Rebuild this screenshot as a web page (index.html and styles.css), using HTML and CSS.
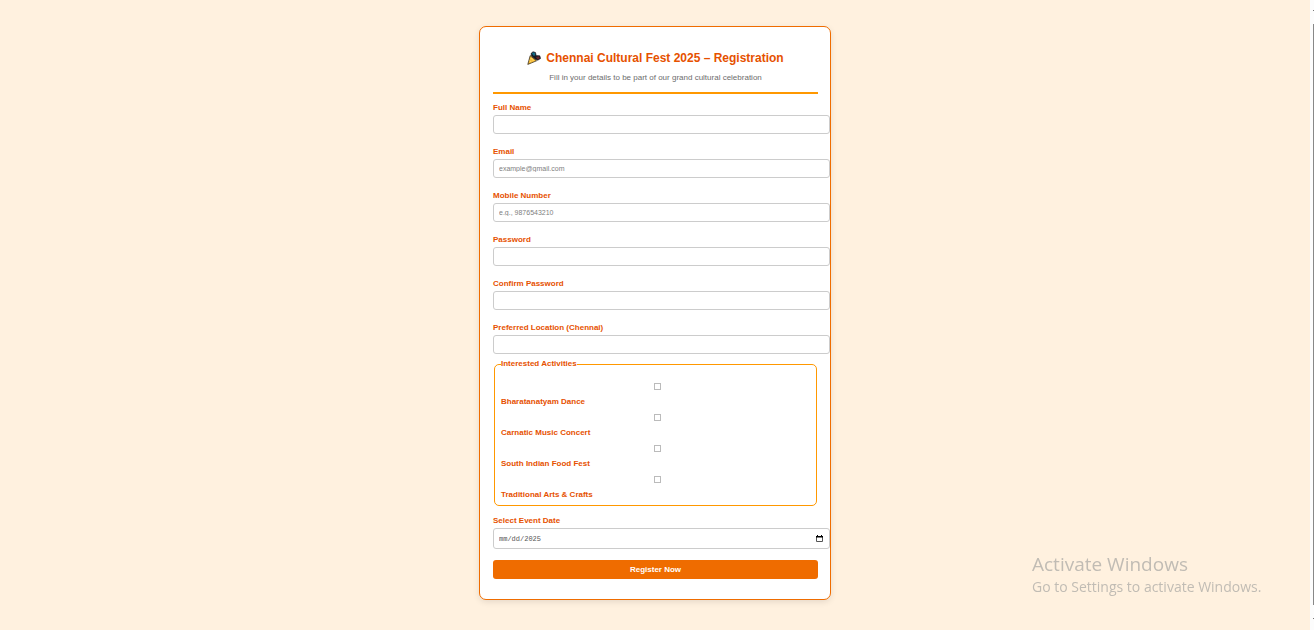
FILE: index.html
```html
<!DOCTYPE html>
<html lang="en">
<head>
<meta charset="utf-8">
<title>Chennai Cultural Fest 2025 – Registration</title>
<link rel="stylesheet" href="styles.css">
</head>
<body>
<main class="page">
  <form class="card">
    <header class="header">
      <h1 class="title">
        <svg class="popper" viewBox="0 0 14 14" aria-hidden="true">
          <path d="M4 2.5 6 .7 8.5 1.5 9.2 4.5 12.8 4.8 13.6 7.5 10.8 9.2 8 8.3 4.5 5z" fill="#171a20" stroke="#171a20" stroke-width=".6"/>
          <path d="M4.8 2.6 6.3 1.2 8 2 8.3 4.5 6.5 4.8z" fill="#126c87"/>
          <path d="M9 5.9 12 5.3 12.9 7.3 10.5 8.5z" fill="#682329"/>
          <path d="M3.2 4.6 9.5 9.8 .8 13.4z" fill="#f8bd38" stroke="#20180d" stroke-width=".7" stroke-linejoin="round"/>
          <path d="M3.8 7 6.8 10.2M2.8 9.5 4.2 11.2" stroke="#ffdc75" stroke-width=".9"/>
        </svg>
        <span>Chennai Cultural Fest 2025 – Registration</span>
      </h1>
      <p class="subtitle">Fill in your details to be part of our grand cultural celebration</p>
    </header>

    <div class="fields">
      <div class="field"><label class="label" for="name">Full Name</label><input class="input" id="name" type="text"></div>
      <div class="field"><label class="label" for="email">Email</label><input class="input" id="email" type="email" placeholder="example@gmail.com"></div>
      <div class="field"><label class="label" for="mobile">Mobile Number</label><input class="input" id="mobile" type="tel" placeholder="e.g., 9876543210"></div>
      <div class="field"><label class="label" for="password">Password</label><input class="input" id="password" type="password"></div>
      <div class="field"><label class="label" for="confirm">Confirm Password</label><input class="input" id="confirm" type="password"></div>
      <div class="field"><label class="label" for="location">Preferred Location (Chennai)</label><input class="input" id="location" type="text"></div>
    </div>

    <fieldset class="activities">
      <legend class="legend">Interested Activities</legend>
      <div class="activity"><input class="check" id="dance" type="checkbox"><label class="label" for="dance">Bharatanatyam Dance</label></div>
      <div class="activity"><input class="check" id="music" type="checkbox"><label class="label" for="music">Carnatic Music Concert</label></div>
      <div class="activity"><input class="check" id="food" type="checkbox"><label class="label" for="food">South Indian Food Fest</label></div>
      <div class="activity"><input class="check" id="crafts" type="checkbox"><label class="label" for="crafts">Traditional Arts &amp; Crafts</label></div>
    </fieldset>

    <div class="field">
      <label class="label" for="date">Select Event Date</label>
      <div class="date-wrap">
        <input class="input date" id="date" type="text" value="mm/dd/2025">
        <svg class="calendar" viewBox="0 0 7 7" aria-hidden="true"><path d="M.5 1.5h6v5h-6z" fill="none" stroke="#555"/><path d="M0 1h7v1.5H0zM1 0h1v1H1zM5 0h1v1H5z" fill="#000"/></svg>
      </div>
    </div>

    <button class="submit" type="submit">Register Now</button>
  </form>
</main>
<div class="scrollbar" aria-hidden="true"><span class="arrow"></span><span class="thumb"></span><span class="arrow"></span></div>
<aside class="watermark">
  <p class="watermark-title">Activate Windows</p>
  <p class="watermark-text">Go to Settings to activate Windows.</p>
</aside>
</body>
</html>
```
FILE: styles.css
```css
* {
  box-sizing: border-box;
}

body {
  display: flex;
  min-height: 100vh;
  margin: 0;
  background: #fff1df;
  font-family: "Liberation Sans", Arial, sans-serif;
}

.page {
  flex: 1;
  padding: 26px 0 30px;
}

.card {
  width: 100%;
  max-width: 352px;
  margin: 0 auto;
  padding: 22px 12px 20px 13px;
  border: 1px solid #ef6c00;
  border-radius: 7px;
  background: #fff;
  box-shadow: 0 2px 6px rgba(0, 0, 0, 0.1);
}

.header {
  margin-bottom: 9px;
  padding-bottom: 9px;
  border-bottom: 2px solid #ff9800;
  text-align: center;
}

.title {
  display: flex;
  align-items: center;
  justify-content: center;
  gap: 5px;
  margin: 0;
  color: #e65100;
  font-size: 12px;
  line-height: 18px;
}

.popper {
  width: 14px;
  height: 14px;
}

.subtitle {
  margin: 6px 0 0;
  color: #6d6d6d;
  font-size: 8px;
  line-height: 10px;
}

.fields {
  display: grid;
  gap: 13px;
}

.field {
  display: flex;
  flex-direction: column;
  gap: 2px;
}

.label,
.legend {
  color: #e65100;
  font-size: 8px;
  font-weight: bold;
  line-height: 10px;
}

.input {
  width: calc(100% + 12px);
  height: 19px;
  padding: 0 5px;
  border: 1px solid #ccc;
  border-radius: 3px;
  background: #fff;
  color: #555;
  font-family: inherit;
  font-size: 7px;
}

.input::placeholder {
  color: #808080;
}

.activities {
  display: grid;
  gap: 4px;
  margin: 5px 1px 10px;
  padding: 11px 6px 5px;
  border: 1px solid #ff9800;
  border-radius: 5px;
}

.legend {
  padding: 0;
}

.activity {
  display: flex;
  flex-direction: column;
  gap: 7px;
}

.check {
  width: 7px;
  height: 7px;
  margin: 3px auto 0;
  border: 1px solid #bbb;
  background: #fff;
  appearance: none;
  transform: translateX(2px);
}

.date-wrap {
  position: relative;
  width: calc(100% + 12px);
}

.date {
  display: block;
  width: 100%;
  height: 21px;
  font-family: "Liberation Mono", monospace;
}

.calendar {
  position: absolute;
  top: 7px;
  right: 7px;
  width: 7px;
  height: 7px;
}

.submit {
  display: block;
  width: 100%;
  height: 19px;
  margin-top: 11px;
  padding: 0;
  border: 0;
  border-radius: 3px;
  background: #ef6c00;
  color: #fff;
  font-family: inherit;
  font-size: 8px;
  font-weight: bold;
}

.scrollbar {
  display: flex;
  flex-direction: column;
  align-items: flex-end;
  gap: 13px;
  width: 4px;
  padding: 10px 0 11px;
  background: #fcfcfc;
}

.arrow {
  width: 1px;
  height: 1px;
  background: #777;
}

.thumb {
  flex: 1;
  width: 1px;
  background: #888;
}

.watermark {
  position: fixed;
  right: 46px;
  bottom: 32px;
  width: 236px;
  color: #c1bcb4;
  font-family: "Open Sans", "Noto Sans", sans-serif;
  white-space: nowrap;
}

.watermark-title,
.watermark-text {
  margin: 0;
}

.watermark-title {
  font-size: 19px;
  line-height: 24px;
}

.watermark-text {
  font-size: 14px;
  line-height: 22px;
}
```
